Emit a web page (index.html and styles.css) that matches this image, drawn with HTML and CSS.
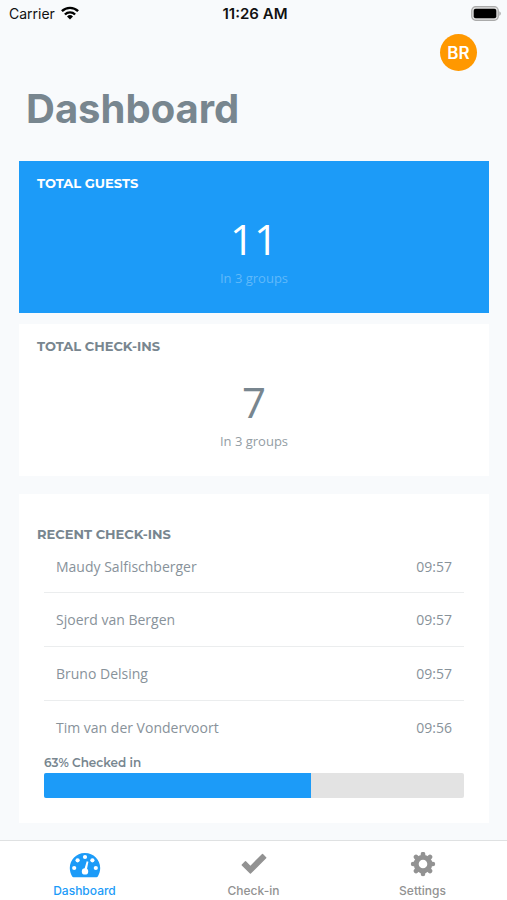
FILE: index.html
```html
<!DOCTYPE html>
<html lang="en">
<head>
<meta charset="utf-8">
<meta name="viewport" content="width=device-width, initial-scale=1">
<title>Dashboard</title>
<link rel="stylesheet" href="styles.css">
</head>
<body>
<div class="status">
  <div class="carrier"><span>Carrier</span>
    <svg width="18" height="14" viewBox="0 0 18 14" aria-hidden="true"><g fill="none" stroke="#000" stroke-width="2.4"><path d="M.9 5.2a11.6 11.6 0 0 1 16.2 0"/><path d="M3.9 8.5a7.3 7.3 0 0 1 10.2 0"/></g><path d="M9 13.6 6 10.5a4.3 4.3 0 0 1 6 0z"/></svg>
  </div>
  <time class="clock">11:26 AM</time>
  <svg class="battery" width="30" height="15" viewBox="0 0 30 15" aria-hidden="true"><rect x=".7" y=".7" width="26.6" height="13.6" rx="4" fill="#ddd" stroke="#aaa" stroke-width="1.2"/><rect x="2.700" y="2.700" width="22.600" height="9.600" rx="2"/><path d="M28.300 5.200c2 .8 2 3.800 0 4.600z" fill="#aaa"/></svg>
</div>
<header class="header">
  <button class="avatar" type="button" aria-label="BR account">BR</button>
  <h1>Dashboard</h1>
</header>
<main class="content">
  <section class="card stat primary">
    <h2>TOTAL GUESTS</h2>
    <p class="number">11</p>
    <p class="groups">In 3 groups</p>
  </section>
  <section class="card stat">
    <h2>TOTAL CHECK-INS</h2>
    <p class="number">7</p>
    <p class="groups">In 3 groups</p>
  </section>
  <section class="card recent">
    <h2>RECENT CHECK-INS</h2>
    <ul>
      <li><span>Maudy Salfischberger</span><time>09:57</time></li>
      <li><span>Sjoerd van Bergen</span><time>09:57</time></li>
      <li><span>Bruno Delsing</span><time>09:57</time></li>
      <li><span>Tim van der Vondervoort</span><time>09:56</time></li>
    </ul>
    <p class="progress-label" id="checked">63% Checked in</p>
    <div class="track" role="progressbar" aria-labelledby="checked" aria-valuenow="63" aria-valuemin="0" aria-valuemax="100"><div class="fill" style="width: 63.6%"></div></div>
  </section>
</main>
<nav class="tabs">
  <a href="#dashboard" class="active">
    <svg width="32" height="26" viewBox="0 0 32 26" aria-hidden="true"><path fill="currentColor" d="M16 1C7.400.8.800 7.900.800 16c0 3.100.9 6 2.400 8.500.3.500.8.700 1.300.7h23c.5 0 1-.2 1.300-.7 1.500-2.500 2.400-5.400 2.400-8.500C31.200 7.900 24.600 1 16 1z"/><g fill="#fff"><circle cx="16" cy="5" r="2.100"/><circle cx="8.600" cy="8.300" r="2.100"/><circle cx="23.400" cy="8.300" r="2.100"/><circle cx="5.200" cy="16" r="2.100"/><circle cx="26.800" cy="16" r="2.100"/><circle cx="16" cy="19.400" r="3.200"/><path d="m17.700 9.300 1.700.4-1.800 9.300-2.600-.5z"/></g></svg>
    <span>Dashboard</span>
  </a>
  <a href="#check-in">
    <svg width="26" height="26" viewBox="0 0 26 26" aria-hidden="true"><path fill="currentColor" stroke="currentColor" stroke-width="1.400" stroke-linejoin="round" d="m1.300 13 3.200-3.200 4.900 4.900L21.500 2.600l3.200 3.200L9.400 21.100z"/></svg>
    <span>Check-in</span>
  </a>
  <a href="#settings">
    <svg width="26" height="26" viewBox="0 0 26 26" aria-hidden="true"><g fill="none" stroke="currentColor"><circle cx="13" cy="12" r="6.800" stroke-width="5"/><path stroke-width="4.600" stroke-linecap="round" d="M13 2.100v2M13 19.900v2M3.100 12h2M20.900 12h2M6 5l1.400 1.400M18.600 17.600l1.400 1.400M6 19l1.400-1.400M18.600 6.400l1.400-1.400"/></g></svg>
    <span>Settings</span>
  </a>
</nav>
</body>
</html>
```
FILE: styles.css
```css
* {
  box-sizing: border-box;
}

body {
  margin: 0;
  min-height: 100vh;
  display: flex;
  flex-direction: column;
  background: #f8fafc;
  color: #78868f;
  font-family: Inter, "Liberation Sans", sans-serif;
}

h1, h2, p, ul {
  margin: 0;
  padding: 0;
}

.status {
  display: grid;
  grid-template-columns: 1fr auto 1fr;
  align-items: center;
  height: 26px;
  padding: 0 6px 0 9px;
  color: #111;
  font-size: 14px;
}

.carrier {
  display: flex;
  align-items: center;
  gap: 6px;
}

.clock {
  font-size: 15px;
  font-weight: 600;
}

.battery {
  justify-self: end;
}

.header {
  display: flex;
  flex-direction: column;
  padding: 8px 30px 0 26px;
}

.avatar {
  align-self: flex-end;
  width: 37px;
  height: 37px;
  padding: 0;
  border: 0;
  border-radius: 50%;
  background: #ff9800;
  color: #fff;
  font: 600 17px Inter, sans-serif;
}

h1 {
  margin-top: 13px;
  font-size: 40px;
  line-height: 50px;
  font-weight: 700;
}

.content {
  flex: 1;
  padding: 27px 18px 17px 19px;
}

.card {
  background: #fff;
}

h2 {
  font-family: Montserrat, Inter, sans-serif;
  font-size: 13px;
  line-height: 16px;
  font-weight: 700;
}

.stat {
  height: 152px;
  margin-bottom: 11px;
  padding: 14px 18px;
}

.stat + .stat {
  margin-bottom: 18px;
}

.number {
  margin-top: 18px;
  font: 400 42px/60px "Open Sans", sans-serif;
  text-align: center;
}

.groups {
  font: 13px/18px "Open Sans", sans-serif;
  text-align: center;
  color: #939da4;
}

.primary {
  background: #1c9bf8;
  color: #fff;
}

.primary .groups {
  color: #60b9fa;
}

.recent {
  padding: 32px 25px 25px;
}

.recent h2 {
  margin-left: -7px;
}

ul {
  list-style: none;
}

li {
  display: flex;
  justify-content: space-between;
  align-items: center;
  height: 54px;
  padding: 0 12px;
  border-bottom: 1px solid #ebedee;
  font: 14px/20px "Open Sans", sans-serif;
  color: #88929a;
}

li:first-child {
  height: 51px;
}

li:last-child {
  border: 0;
}

.progress-label {
  font: 600 12px/16px Montserrat, Inter, sans-serif;
}

.track {
  height: 25px;
  margin-top: 2px;
  overflow: hidden;
  border-radius: 2px;
  background: #e3e3e3;
}

.fill {
  height: 100%;
  background: #1c9bf8;
}

.tabs {
  display: grid;
  grid-template-columns: repeat(3, 1fr);
  height: 60px;
  border-top: 1px solid #dfe1e2;
  background: #fff;
}

.tabs a {
  display: flex;
  flex-direction: column;
  align-items: center;
  gap: 5px;
  padding-top: 11px;
  color: #929292;
  font-size: 12px;
  line-height: 16px;
  font-weight: 500;
  text-decoration: none;
}

.tabs .active {
  color: #1c9bf8;
}
```
